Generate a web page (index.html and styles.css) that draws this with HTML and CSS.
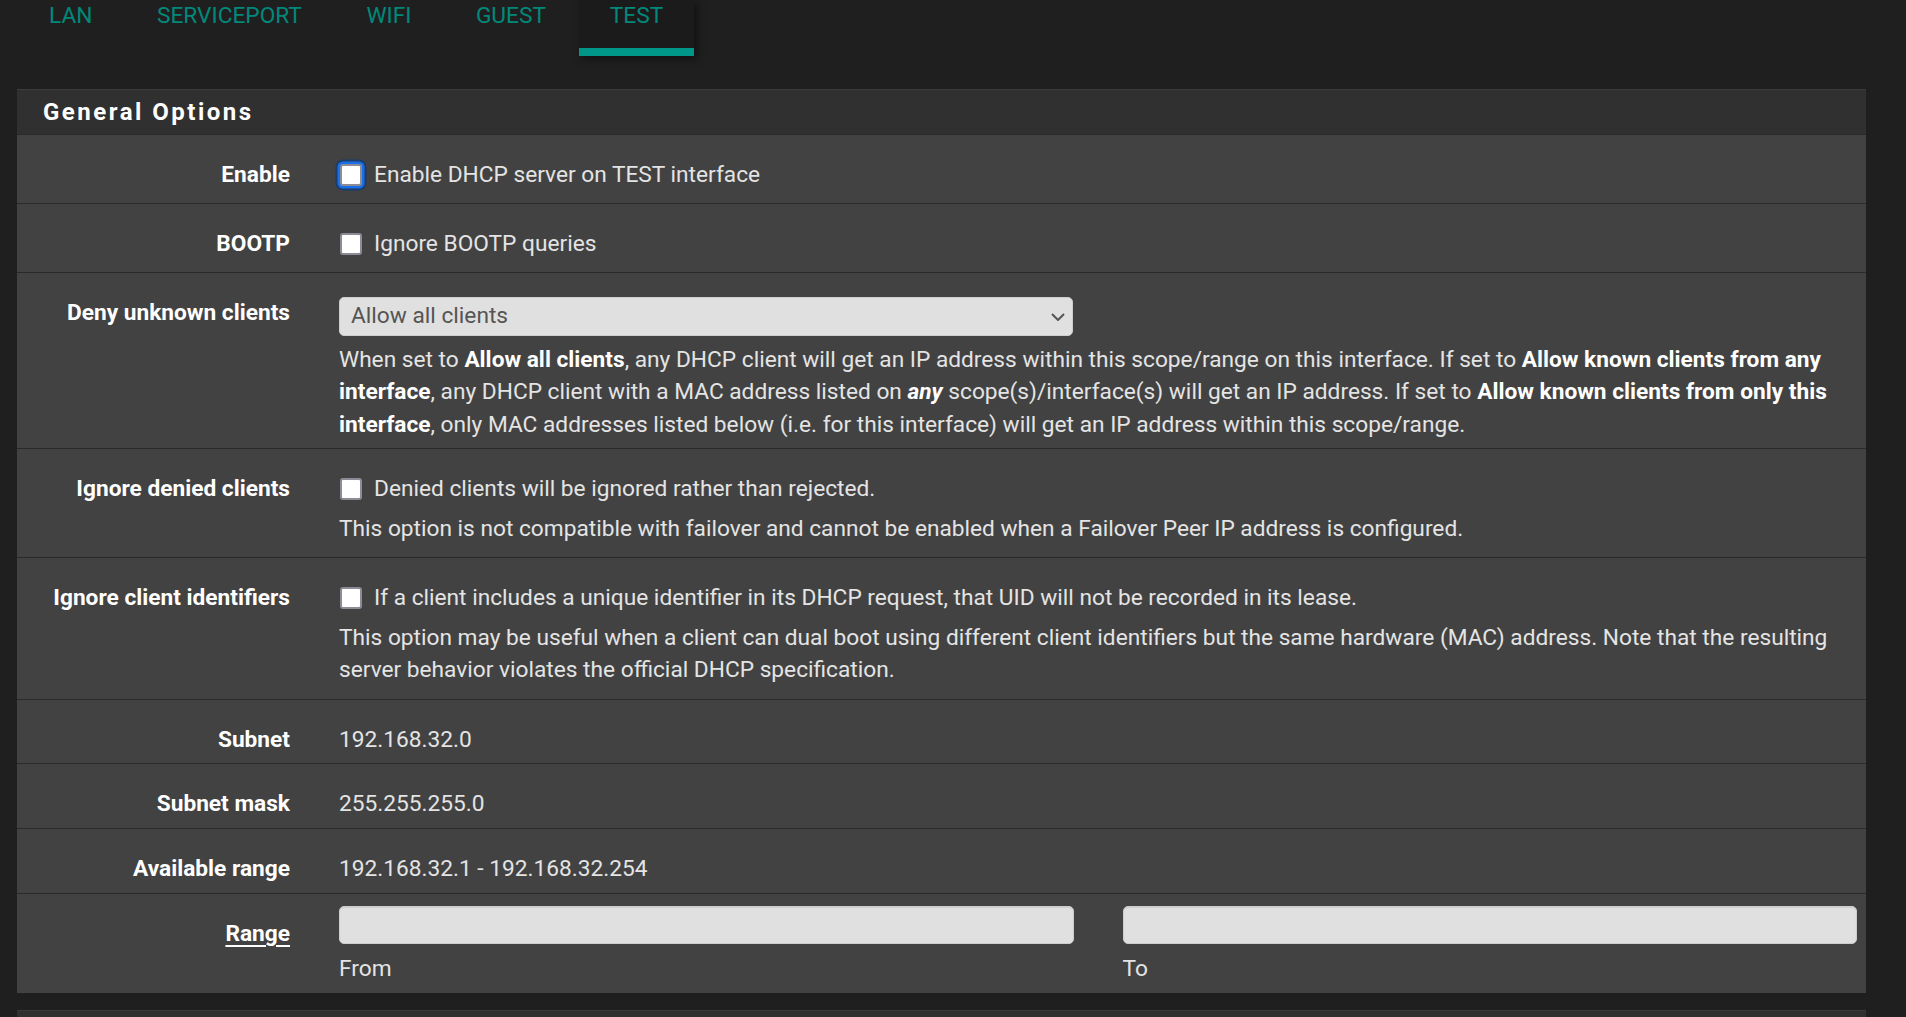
FILE: index.html
```html
<!DOCTYPE html>
<html lang="en">
<head>
<meta charset="utf-8">
<title>DHCP Server - TEST</title>
<link rel="stylesheet" href="styles.css">
</head>
<body>
<ul class="tabs">
  <li class="tab">LAN</li>
  <li class="tab">SERVICEPORT</li>
  <li class="tab">WIFI</li>
  <li class="tab">GUEST</li>
  <li class="tab active">TEST</li>
</ul>

<div class="panel">
  <div class="panel-head">General Options</div>
  <div class="panel-body">
    <div class="row">
      <div class="lbl">Enable</div>
      <div class="cell">
        <label class="chk"><input type="checkbox" class="cb focus">Enable DHCP server on TEST interface</label>
      </div>
    </div>
    <div class="row">
      <div class="lbl">BOOTP</div>
      <div class="cell">
        <label class="chk"><input type="checkbox" class="cb">Ignore BOOTP queries</label>
      </div>
    </div>
    <div class="row">
      <div class="lbl">Deny unknown clients</div>
      <div class="cell">
        <div class="select-wrap">
          <div class="select">Allow all clients</div>
          <svg class="chev" width="14" height="8" viewBox="0 0 14 8"><path d="M1 1 L7 7 L13 1" fill="none" stroke="#555" stroke-width="2"/></svg>
        </div>
        <p class="help help-deny">When set to <b>Allow all clients</b>, any DHCP client will get an IP address within this scope/range on this interface. If set to <b>Allow known clients from any interface</b>, any DHCP client with a MAC address listed on <b><i>any</i></b> scope(s)/interface(s) will get an IP address. If set to <b>Allow known clients from only this interface</b>, only MAC addresses listed below (i.e. for this interface) will get an IP address within this scope/range.</p>
      </div>
    </div>
    <div class="row">
      <div class="lbl">Ignore denied clients</div>
      <div class="cell">
        <label class="chk"><input type="checkbox" class="cb">Denied clients will be ignored rather than rejected.</label>
        <p class="help">This option is not compatible with failover and cannot be enabled when a Failover Peer IP address is configured.</p>
      </div>
    </div>
    <div class="row">
      <div class="lbl">Ignore client identifiers</div>
      <div class="cell">
        <label class="chk"><input type="checkbox" class="cb">If a client includes a unique identifier in its DHCP request, that UID will not be recorded in its lease.</label>
        <p class="help">This option may be useful when a client can dual boot using different client identifiers but the same hardware (MAC) address. Note that the resulting server behavior violates the official DHCP specification.</p>
      </div>
    </div>
    <div class="row row-static">
      <div class="lbl">Subnet</div>
      <div class="cell">192.168.32.0</div>
    </div>
    <div class="row row-static">
      <div class="lbl">Subnet mask</div>
      <div class="cell">255.255.255.0</div>
    </div>
    <div class="row row-static">
      <div class="lbl">Available range</div>
      <div class="cell">192.168.32.1 - 192.168.32.254</div>
    </div>
    <div class="row">
      <div class="lbl"><a class="lnk" href="#">Range</a></div>
      <div class="cell cell-range">
        <div class="range-col">
          <input type="text" class="inp">
          <div class="sub">From</div>
        </div>
        <div class="range-col">
          <input type="text" class="inp">
          <div class="sub">To</div>
        </div>
      </div>
    </div>
  </div>
</div>

<div class="panel panel-next">
  <div class="panel-head"></div>
</div>
</body>
</html>
```

FILE: styles.css
```css
* { box-sizing: border-box; }
html, body { margin: 0; padding: 0; }
body {
  background: #1f1f1f;
  font-family: Roboto, "Liberation Sans", sans-serif;
  font-size: 22.7px;
  line-height: 32.5px;
  color: #e4e4e4;
  width: 1906px;
  height: 1017px;
  overflow: hidden;
}

.tabs {
  display: flex;
  list-style: none;
  margin: 0;
  padding: 0 0 0 17px;
  height: 56px;
}
.tab {
  padding: 0 32.25px 15.5px;
  border-bottom: 8px solid transparent;
  color: #00897b;
  text-transform: uppercase;
}
.tab:first-child { padding-left: 32px; }
.tab.active {
  background: #1b1b1b;
  border-bottom-color: #009688;
  box-shadow: 3px 3px 8px rgba(0, 0, 0, 0.45);
  padding-left: 31px;
  padding-right: 31px;
  margin-left: 0.5px;
}

.panel {
  margin: 32.5px 40px 0 17px;
  background: #424242;
}
.panel-head {
  height: 46px;
  background: #303030;
  border-top: 1px solid #3b3b3b;
  border-bottom: 1px solid #2a2a2a;
  padding: 1.5px 0 0 26px;
  font-weight: 700;
  font-size: 24px;
  letter-spacing: 2.5px;
  line-height: 42.5px;
  color: #ffffff;
}
.panel-next { margin-top: 17.5px; }

.row {
  display: grid;
  grid-template-columns: 290px 1fr;
  column-gap: 32px;
  padding-right: 9px;
  border-bottom: 1px solid #2a2a2a;
}
.row:last-child { border-bottom: 0; }

.lbl {
  text-align: right;
  padding: 24px 17px 7px 0;
  font-weight: 700;
  color: #ffffff;
}
.lnk {
  color: #ffffff;
  text-decoration: underline;
  text-decoration-thickness: 2px;
  text-underline-offset: 4px;
}
.cell {
  padding: 24px 0 7px 0;
}
.row-static .cell,
.row-static .lbl {
  padding-bottom: 7.2px;
}

.chk {
  display: flex;
  align-items: center;
  height: 32.5px;
  margin-bottom: 4.5px;
}
.cb {
  appearance: none;
  -webkit-appearance: none;
  width: 22px;
  height: 22px;
  margin: 0 12px 0 1px;
  background: #ffffff;
  border: 2px solid #8c8c97;
  border-radius: 3px;
  flex: none;
}
.cb.focus {
  box-shadow: 0 0 0 2.5px #1a6fe6, 0 0 0 4.5px rgba(20, 60, 115, 0.85);
}

.help {
  margin: 7px 0 5px;
}
.help b { color: #ffffff; }
.help-deny {
  margin: 8px 0 0;
}

.select-wrap {
  position: relative;
  width: 734px;
  height: 39px;
}
.select {
  height: 39px;
  background: #e0e0e0;
  border: 1px solid #cdcdcd;
  border-radius: 5px;
  color: #555555;
  padding: 0 0 0 11px;
  line-height: 36px;
}
.chev {
  position: absolute;
  right: 8px;
  top: 16px;
}

.cell-range {
  padding-top: 12px;
  padding-bottom: 7.5px;
  display: grid;
  grid-template-columns: 1fr 1fr;
  column-gap: 49px;
}
.inp {
  display: block;
  width: 100%;
  height: 38px;
  margin: 0;
  background: #e0e0e0;
  border: 1px solid #cdcdcd;
  border-radius: 5px;
  box-shadow: inset 0 1px 1px rgba(0, 0, 0, 0.08);
  font: inherit;
}
.sub {
  margin-top: 9px;
}
```
